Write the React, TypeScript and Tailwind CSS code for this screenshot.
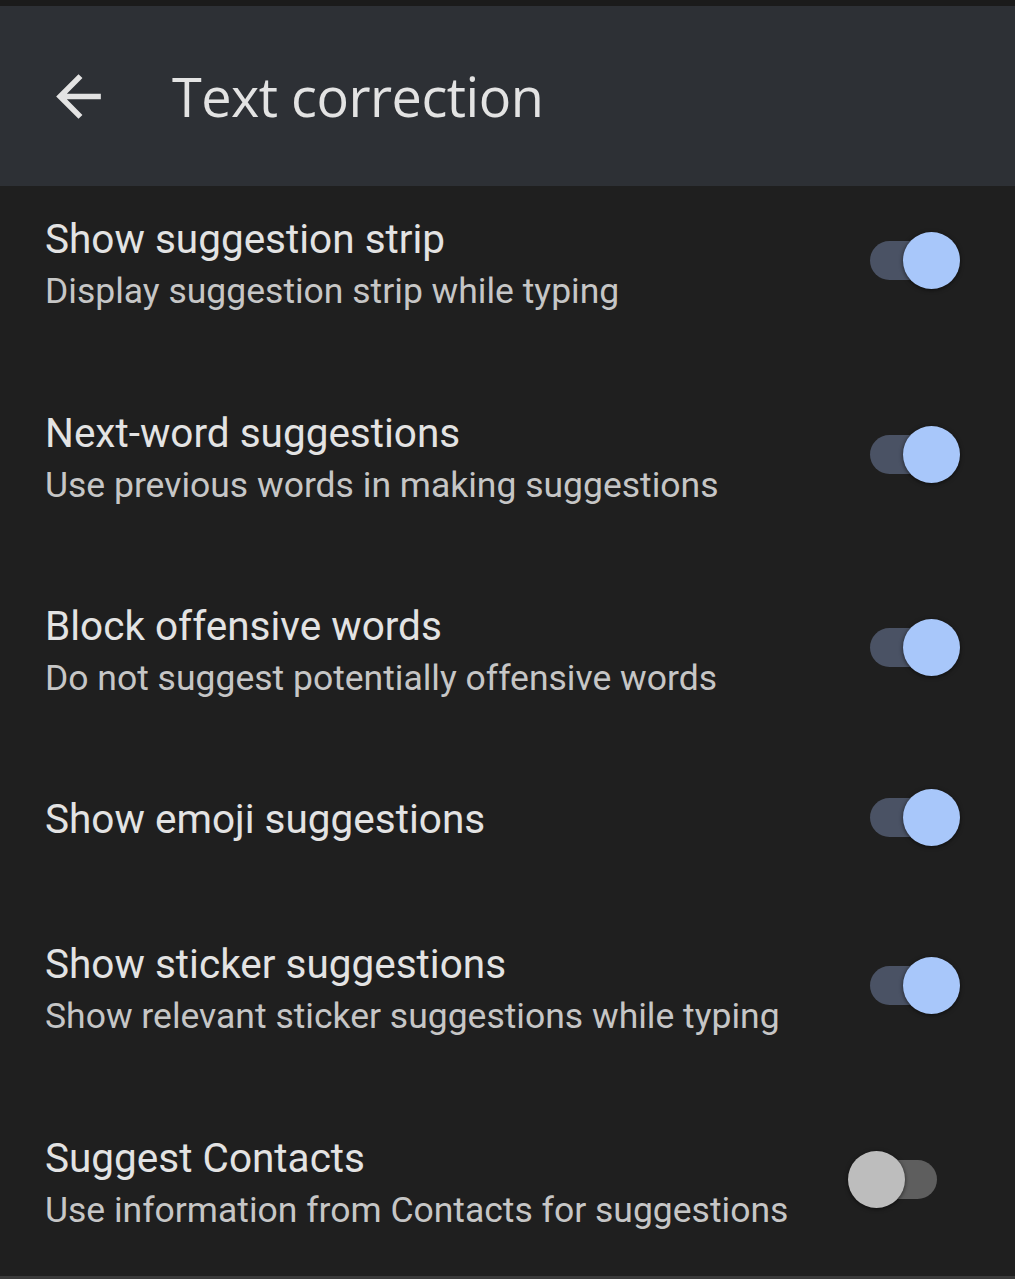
type Setting = {
  title: string;
  summary?: string;
  on: boolean;
  height: string;
};

const settings: Setting[] = [
  { title: 'Show suggestion strip', summary: 'Display suggestion strip while typing', on: true, height: 'h-[178px] pb-[16px]' },
  { title: 'Next-word suggestions', summary: 'Use previous words in making suggestions', on: true, height: 'h-[194px]' },
  { title: 'Block offensive words', summary: 'Do not suggest potentially offensive words', on: true, height: 'h-[192px]' },
  { title: 'Show emoji suggestions', on: true, height: 'h-[138px]' },
  { title: 'Show sticker suggestions', summary: 'Show relevant sticker suggestions while typing', on: true, height: 'h-[208px]' },
  { title: 'Suggest Contacts', summary: 'Use information from Contacts for suggestions', on: false, height: 'h-[180px]' },
];

const Toggle = ({ on, raised }: { on: boolean; raised: boolean }) => {
  return (
    <div className={`relative w-[112px] h-[57px] shrink-0 ${raised ? 'mb-[13px]' : 'mb-[4px]'}`}>
      {on ? (
        <>
          <div className="absolute left-[22px] top-[9px] w-[82px] h-[39px] rounded-full bg-[#4a5264]" />
          <div className="absolute left-[55px] top-0 w-[57px] h-[57px] rounded-full bg-[#a8c7fa] shadow-[0_1px_4px_rgba(0,0,0,0.6)]" />
        </>
      ) : (
        <>
          <div className="absolute left-[10px] top-[9px] w-[79px] h-[39px] rounded-full bg-[#5e5e5e]" />
          <div className="absolute left-0 top-0 w-[57px] h-[57px] rounded-full bg-[#bdbdbd] shadow-[0_1px_4px_rgba(0,0,0,0.6)]" />
        </>
      )}
    </div>
  );
};

const SettingRow = ({ item }: { item: Setting }) => {
  return (
    <div className={`flex items-center justify-between pl-[45px] pr-[55px] ${item.height}`}>
      <div className="flex flex-col">
        <span className="text-[40.5px] leading-[48px] text-[#e3e3e3]">{item.title}</span>
        {item.summary && (
          <span className="text-[35.5px] leading-[57px] text-[#c6c6c6]">{item.summary}</span>
        )}
      </div>
      <Toggle on={item.on} raised={!!item.summary} />
    </div>
  );
};

export default function App() {
  return (
    <div className="w-[1015px] h-[1279px] overflow-hidden bg-[#1f1f1f] flex flex-col font-['Roboto',sans-serif]">
      <div className="h-[6px] bg-[#1b1b1b]" />
      <header className="h-[180px] bg-[#2d3035] flex items-center">
        <svg viewBox="0 0 24 24" className="w-[67px] h-[67px] ml-[45px]" fill="#e3e3e3">
          <path d="M20 11H7.83l5.59-5.59L12 4l-8 8 8 8 1.41-1.41L7.83 13H20v-2z" />
        </svg>
        <h1 className="ml-[60px] text-[54px] leading-none text-[#e3e3e3] font-['Open_Sans',sans-serif] tracking-[-0.5px]">
          Text correction
        </h1>
      </header>
      <div className="flex flex-col">
        {settings.map((s) => (
          <SettingRow key={s.title} item={s} />
        ))}
      </div>
      <div className="mt-auto h-[3px] bg-[#3a3a3a]" />
    </div>
  );
}
